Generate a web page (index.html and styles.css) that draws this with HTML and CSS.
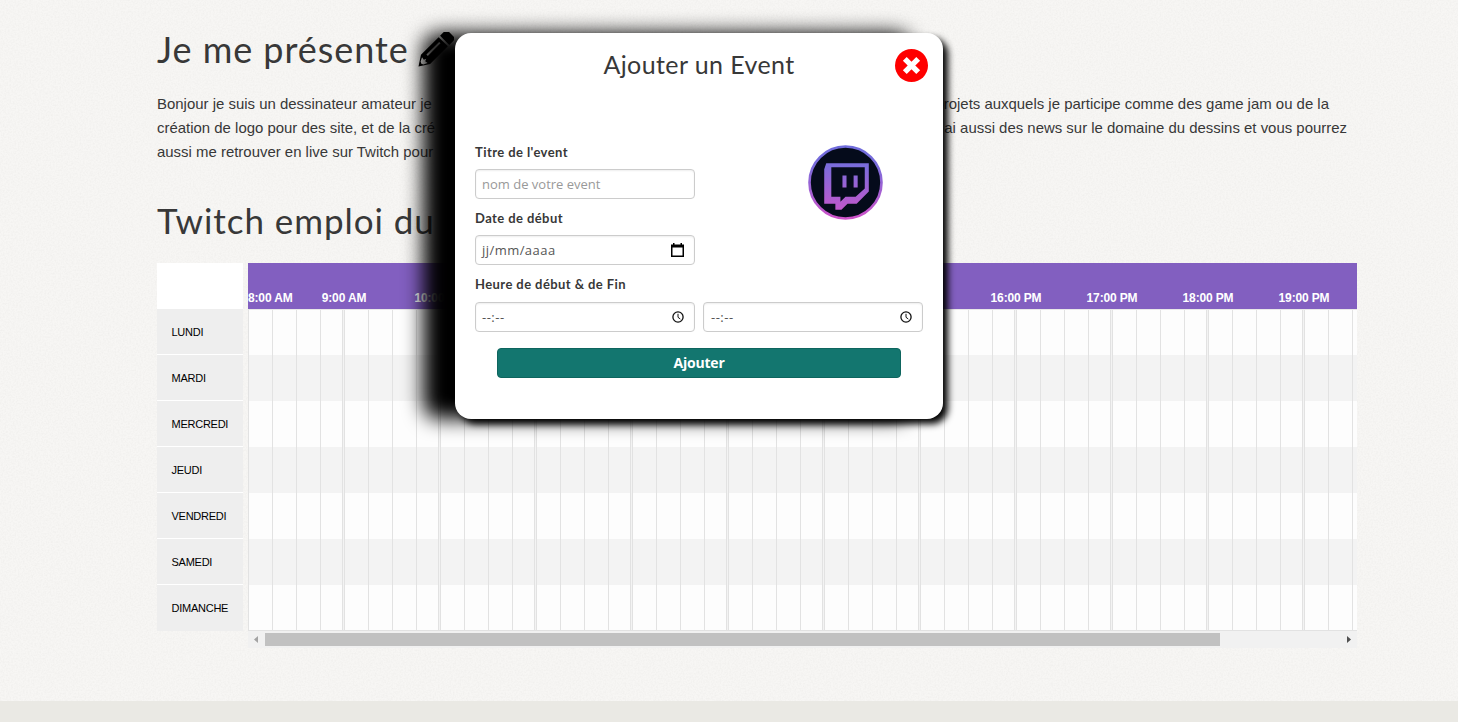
FILE: index.html
```
<!DOCTYPE html>
<html lang="fr">
<head>
<meta charset="utf-8">
<title>Ajouter un Event</title>
<link rel="stylesheet" href="styles.css">
</head>
<body>
<svg class="grain" width="1458" height="701" aria-hidden="true">
  <filter id="paper" x="0" y="0" width="100%" height="100%">
    <feTurbulence type="fractalNoise" baseFrequency="0.6" numOctaves="2" seed="4"/>
    <feColorMatrix values="0 0 0 0 .35  0 0 0 0 .34  0 0 0 0 .32  .14 0 0 0 -.05"/>
  </filter>
  <rect width="1458" height="701" filter="url(#paper)"/>
</svg>
<main class="page">
  <h1 class="heading heading-intro"><span class="heading-about">Je me présente</span>
    <svg class="pencil" viewBox="0 0 36 36"><g transform="translate(.5 34.500) rotate(-45)"><path fill-rule="evenodd" d="M0 0 10-6.500H35V6.500H10ZM14-2.800V-.800H32V-2.800ZM5-2 4 0 5 2 9 4 8.500 1 11 0 8.500-1 9-4Z"/><path d="M37-6.500h6q3 0 3 3v7q0 3-3 3h-6z"/></g></svg>
  </h1>
  <div class="about">
    <p class="line line-1"><span>Bonjour je suis un dessinateur amateur je</span><span>projets auxquels je participe comme des game jam ou de la</span></p>
    <p class="line line-2"><span>création de logo pour des site, et de la cré</span><span>ai aussi des news sur le domaine du dessins et vous pourrez</span></p>
    <p class="line"><span>aussi me retrouver en live sur Twitch pour</span></p>
  </div>
  <h1 class="heading heading-schedule">Twitch emploi du</h1>
  <section class="schedule">
    <div class="days">
      <div class="corner"></div>
      <div class="day">LUNDI</div><div class="day">MARDI</div><div class="day">MERCREDI</div><div class="day">JEUDI</div><div class="day">VENDREDI</div><div class="day">SAMEDI</div><div class="day">DIMANCHE</div>
    </div>
    <div class="timeline">
      <div class="hours"><span class="first">8:00 AM</span><span>9:00 AM</span><span>10:00 AM</span><span>11:00 AM</span><span>12:00 PM</span><span>13:00 PM</span><span>14:00 PM</span><span></span><span>16:00 PM</span><span>17:00 PM</span><span>18:00 PM</span><span>19:00 PM</span></div>
      <div class="slots"></div>
      <div class="scrollbar">
        <svg width="17" height="17"><path d="M10 5v7L6 8.500z" fill="#a3a3a3"/></svg>
        <div class="thumb"></div>
        <svg class="next" width="17" height="17"><path d="M7 5v7l4-3.500z" fill="#505050"/></svg>
      </div>
    </div>
  </section>
</main>
<footer class="footer"></footer>

<div class="modal">
  <h2 class="modal-title">Ajouter un Event</h2>
  <svg class="close" viewBox="0 0 33 33"><circle cx="16.500" cy="16.500" r="16.500" fill="red"/><path d="M9.800 9.800 23.200 23.200M23.200 9.800 9.800 23.200" stroke="#fff" stroke-width="5.400"/></svg>
  <svg class="twitch" viewBox="0 0 74 74">
    <defs><linearGradient id="tw" gradientUnits="userSpaceOnUse" x1="0" y1="0" x2="0" y2="74"><stop offset="0" stop-color="#6f6cdb"/><stop offset=".28" stop-color="#7b6cdb"/><stop offset="1" stop-color="#d052c8"/></linearGradient></defs>
    <circle cx="37" cy="37" r="35.500" fill="#050b1b" stroke="url(#tw)" stroke-width="2.600"/>
    <path fill="url(#tw)" fill-rule="evenodd" d="M18 18H60V46L48 58H39L33 64H27V58H16V24ZM23 22V51H32V56L37 51H47L56 43V22Z"/>
    <path fill="url(#tw)" d="M34 30h4v12h-4zM45 30h4v12h-4z"/>
  </svg>
  <div class="form">
    <label class="label l1">Titre de l'event</label>
    <div class="input placeholder">nom de votre event</div>
    <label class="label l2">Date de début</label>
    <div class="input"><span class="date">jj/mm/aaaa</span><svg width="13" height="14"><path fill-rule="evenodd" d="M0 1.500h2V0h1.500v1.500h6V0H11v1.500h2V14H0ZM1.500 4.500v8h10v-8Z"/></svg></div>
    <label class="label l3">Heure de début &amp; de Fin</label>
    <div class="times">
      <div class="input time"><span>--:--</span><svg width="12" height="12" fill="none" stroke="#111" stroke-width="1.300"><circle cx="6" cy="6" r="5.100"/><path d="M6 2.800v3.500l2.300 1.700" stroke-width="1"/></svg></div>
      <div class="input time time-end"><span>--:--</span><svg width="12" height="12" fill="none" stroke="#111" stroke-width="1.300"><circle cx="6" cy="6" r="5.100"/><path d="M6 2.800v3.500l2.300 1.700" stroke-width="1"/></svg></div>
    </div>
    <button class="submit">Ajouter</button>
  </div>
</div>
</body>
</html>
```
FILE: styles.css
```
* { box-sizing: border-box; }
body { margin: 0; width: 1458px; height: 722px; overflow: hidden; position: relative; background: #f7f6f4; color: #383838; font-family: "Liberation Sans", Arial, sans-serif; }
.grain { position: absolute; inset: 0; z-index: -1; }
.page { height: 701px; padding: 25px 101px 0 157px; }
.footer { height: 21px; background: #eae9e4; }
.heading { margin: 0; height: 48px; display: flex; align-items: center; font: 400 35px/48px Lato, sans-serif; letter-spacing: 0.95px; white-space: nowrap; }
.heading-intro { font-size: 36px; }
.heading-about { width: 261px; }
.pencil { width: 36px; height: 36px; fill: #000; margin-top: 2px; }
.about { height: 72px; margin-top: 19px; }
.line { display: flex; justify-content: space-between; margin: 0; height: 24px; font-size: 14.95px; line-height: 24px; white-space: nowrap; }
.line-1 { width: 1172px; }
.line-2 { width: 1190px; }
.heading-schedule { margin-top: 32px; }
.schedule { display: flex; gap: 5px; margin-top: 19px; }
.days { width: 86px; }
.corner { height: 46px; background: #fff; }
.day { height: 46px; padding-left: 14.5px; background: #eee; border-bottom: 1px solid #fff; color: #000; font-size: 11px; letter-spacing: -0.25px; line-height: 46px; }
.day:last-child { border-bottom: 0; }
.timeline { width: 1109px; }
.hours { display: flex; height: 46px; padding-top: 27px; background: #825fc0; color: #fff; font-size: 12px; font-weight: 700; letter-spacing: -0.15px; line-height: 17px; white-space: nowrap; overflow: hidden; }
.hours span { flex: 0 0 96px; text-align: center; }
.hours .first { flex-basis: 48px; text-align: left; }
.slots { height: 322px; border-bottom: 1px solid #e2e2e2; border-top: 1px solid #e8e8e8; background: repeating-linear-gradient(90deg, #e2e2e2 0 1px, transparent 1px 24px, #e2e2e2 24px 25px, transparent 25px 48px, #e2e2e2 48px 49px, transparent 49px 72px, #e2e2e2 72px 73px, transparent 73px 94px, #e2e2e2 94px 95px, #f3f3f3 95px 96px), repeating-linear-gradient(#fdfdfd 0 45px, #f3f3f3 45px 91px, #fdfdfd 91px 92px); }
.scrollbar { display: flex; height: 17px; background: #f1f1f1; }
.thumb { width: 955px; height: 13px; margin-top: 2px; background: #c1c1c1; }
.next { margin-left: auto; }
.modal { position: absolute; left: 455px; top: 33px; width: 488px; height: 386px; border-radius: 16px; background: #fff; box-shadow: 5px 5px 7px #000, -32px 0 20px #000; }
.modal-title { margin: 0; padding-top: 14px; height: 50px; text-align: center; font: 400 25px/34px Lato, sans-serif; letter-spacing: 0.4px; }
.close { position: absolute; left: 440px; top: 16px; width: 33px; height: 33px; }
.twitch { position: absolute; left: 353px; top: 112px; width: 75px; height: 75px; }
.form { padding: 60px 20px 0; }
.label { display: block; height: 26px; font: 700 13px/18px Lato, sans-serif; letter-spacing: 0.42px; }
.input { display: flex; justify-content: space-between; align-items: center; width: 220px; height: 30px; padding: 0 10px 0 6px; border: 1px solid #ccc; border-radius: 4px; box-shadow: inset 0 1px 2px #eee; color: #555; font: 13px/28px "Open Sans", sans-serif; }
.placeholder { color: #999; }
.date { letter-spacing: 0.45px; }
.time { letter-spacing: 0.5px; }
.time svg { margin-top: -1px; }
.time-end { padding-left: 7px; }
.l2, .l3 { margin-top: 10px; }
.l3 { height: 27px; }
.times { display: flex; gap: 8px; }
.submit { display: block; width: 404px; height: 30px; margin: 16px 0 0 22px; padding: 0; border: 1px solid #0e655e; border-radius: 4px; background: #13766f; color: #fff; font: 700 14px/26px "Open Sans", sans-serif; letter-spacing: -0.2px; }
```
